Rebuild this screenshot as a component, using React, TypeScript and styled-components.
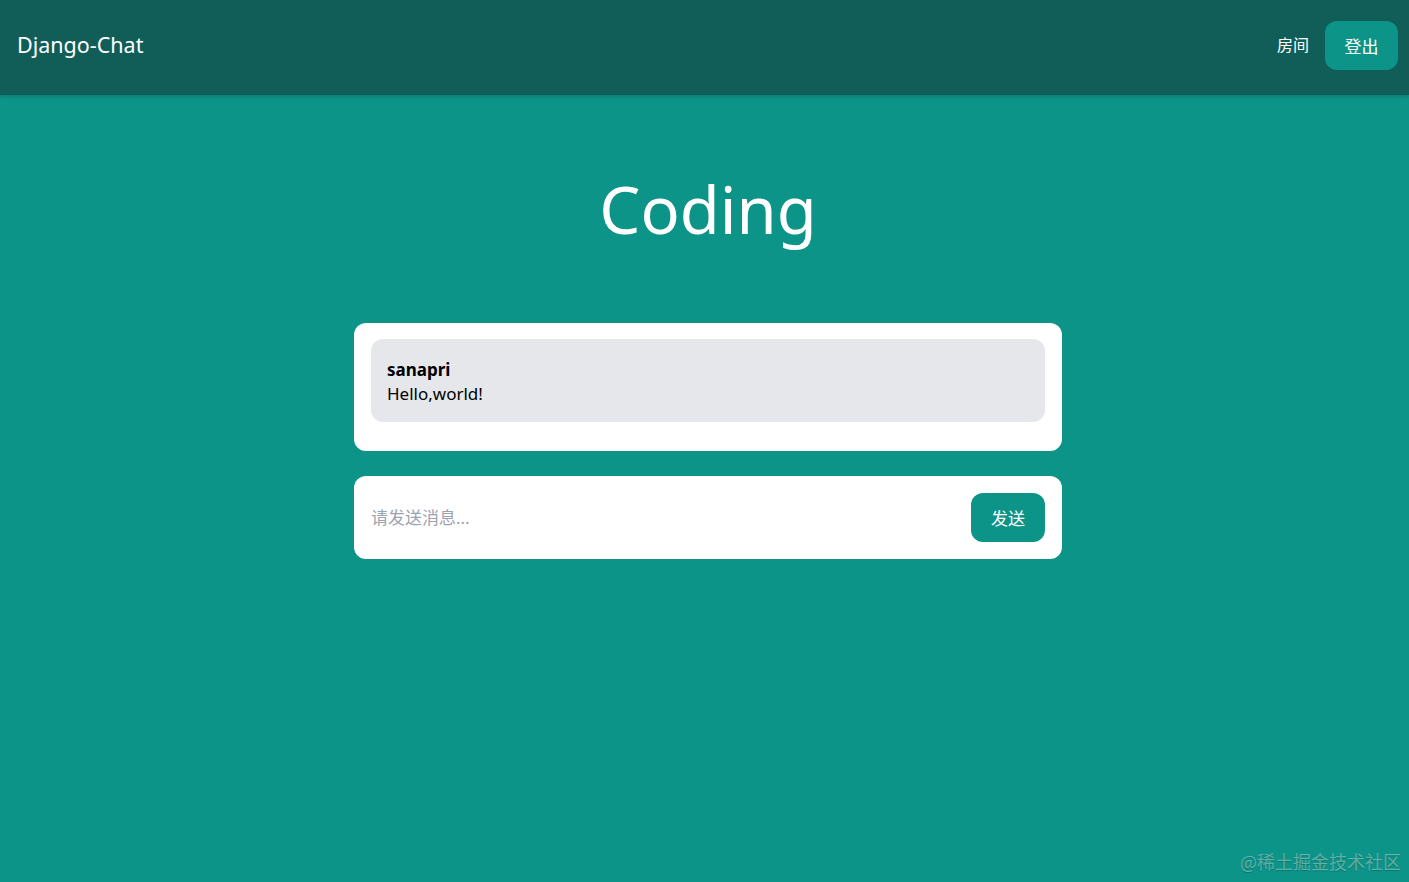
import React from 'react'
import styled, { createGlobalStyle } from 'styled-components';

const GlobalStyle = createGlobalStyle`
    html, body {
        margin: 0;
        padding: 0;
        background: #0d9488;
        font-family: "Noto Sans", "Noto Sans CJK SC", sans-serif;
    }
    * {
        box-sizing: border-box;
    }
`;

const Page = styled.div`
    min-height: 882px;
    background: #0d9488;
    display: flex;
    flex-direction: column;
    position: relative;
`;

const Nav = styled.nav`
    height: 95px;
    background: #115e59;
    display: flex;
    align-items: center;
    justify-content: space-between;
    padding: 0 11px 4px 17px;
    box-shadow: 0 2px 3px rgba(0, 0, 0, 0.15);
`;

const Logo = styled.a`
    color: #ffffff;
    font-size: 21.5px;
    text-decoration: none;
    padding-bottom: 2px;
`;

const NavLinks = styled.div`
    display: flex;
    align-items: center;
    gap: 16px;
`;

const NavLink = styled.a`
    color: #ffffff;
    font-size: 16px;
    text-decoration: none;
    padding-bottom: 3px;
`;

const NavButton = styled.a`
    display: flex;
    align-items: center;
    justify-content: center;
    width: 73px;
    height: 49px;
    border-radius: 12px;
    background: #0d9488;
    color: #ffffff;
    font-size: 17px;
    text-decoration: none;
`;

const Main = styled.main`
    padding-left: 7px;
`;

const Hero = styled.div`
    padding-top: 66px;
    padding-bottom: 66px;
    text-align: center;
`;

const Title = styled.h1`
    margin: 0;
    color: #ffffff;
    font-weight: 400;
    font-size: 65px;
    line-height: 96px;
`;

const Card = styled.div`
    width: 708px;
    margin: 0 auto;
    background: #ffffff;
    border-radius: 12px;
    padding: 16px 17px;
`;

const Messages = styled(Card)`
    padding-bottom: 29px;
    margin-bottom: 25px;
`;

const Message = styled.div`
    background: #e5e7eb;
    border-radius: 12px;
    padding: 19px 16px 16px 16px;
    font-size: 17px;
    line-height: 24px;
    color: #000000;
`;

const Author = styled.p`
    margin: 0;
    font-weight: 700;
`;

const Text = styled.p`
    margin: 0;
`;

const Form = styled(Card)`
    display: flex;
    align-items: center;
    gap: 16px;
    padding: 17px;
`;

const Input = styled.input`
    flex: 1;
    border: none;
    outline: none;
    font-size: 17px;
    font-family: inherit;
    color: #111827;
    padding: 0;

    &::placeholder {
        color: #9ca3af;
    }
`;

const SendButton = styled.button`
    width: 74px;
    height: 49px;
    border: none;
    border-radius: 12px;
    background: #0d9488;
    color: #ffffff;
    font-size: 17px;
    font-family: inherit;
`;

const Watermark = styled.div`
    position: absolute;
    right: 8px;
    bottom: 8px;
    color: rgba(255, 255, 255, 0.35);
    font-family: "Noto Sans CJK SC", serif;
    font-size: 18px;
    text-shadow: 0 1px 1px rgba(0, 0, 0, 0.2);
`;

export default function App() {
    const messages = [
        { author: 'sanapri', text: 'Hello,world!' },
    ];

    return (
        <Page>
            <GlobalStyle />
            <Nav>
                <Logo href="#">Django-Chat</Logo>
                <NavLinks>
                    <NavLink href="#">房间</NavLink>
                    <NavButton href="#">登出</NavButton>
                </NavLinks>
            </Nav>
            <Main>
                <Hero>
                    <Title>Coding</Title>
                </Hero>
                <Messages>
                    {messages.map((m, i) => (
                        <Message key={i}>
                            <Author>{m.author}</Author>
                            <Text>{m.text}</Text>
                        </Message>
                    ))}
                </Messages>
                <Form>
                    <Input placeholder="请发送消息..." />
                    <SendButton>发送</SendButton>
                </Form>
            </Main>
            <Watermark>@稀土掘金技术社区</Watermark>
        </Page>
    )
}
